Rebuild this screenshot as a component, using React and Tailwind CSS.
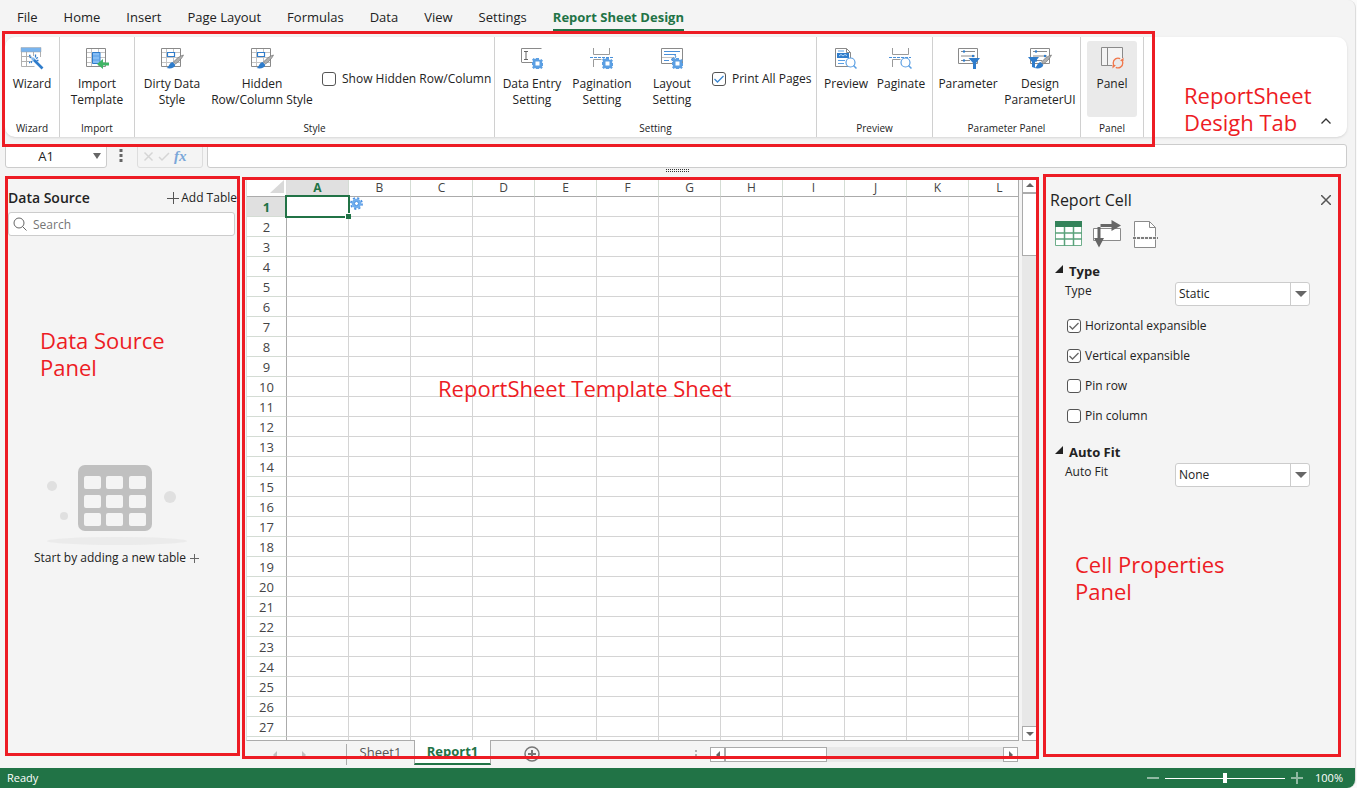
import { useState } from "react";
import clsx from "clsx";

const menus = [
  "File",
  "Home",
  "Insert",
  "Page Layout",
  "Formulas",
  "Data",
  "View",
  "Settings",
];

const columns = ["A", "B", "C", "D", "E", "F", "G", "H", "I", "J", "K", "L"];
const rows = Array.from({ length: 27 }, (_, i) => i + 1);

/* ---------- Icons ---------- */

function Icon({ children }) {
  return (
    <svg
      className="w-6 h-6 shrink-0"
      viewBox="0 0 24 24"
      fill="none"
      aria-hidden="true"
    >
      {children}
    </svg>
  );
}

function Gear({ x = 0, y = 0 }) {
  return (
    <g transform={`translate(${x} ${y})`}>
      <path
        d="M4 0h3v1.6l1.1.5L9.300 1l1.7 1.700-1.100 1.200.5 1.100H11v3h-.600l-.500 1.100L11 9.300 9.300 11l-1.200-1.100-1.100.5V11H4v-.600l-1.100-.500L1.700 11 0 9.300l1.100-1.200L.600 7H0V4h.600l.5-1.100L0 1.700 1.700 0l1.200 1.100L4 .600z"
        fill="#5b9fe3"
      />
      <rect x="3.500" y="3.500" width="4" height="4" fill="#fff" />
    </g>
  );
}

function GridLines() {
  return (
    <>
      <path d="M1.500 2.500h19v18h-19z" stroke="#8a8a8a" />
      <path
        d="M2 6.500h18M2 11.500h18M2 16.500h18M6.500 3v17M13.500 3v17"
        stroke="#c4c4c4"
      />
    </>
  );
}

function Brush() {
  return (
    <>
      <path d="M23.500 9c-1.500 3.500-5 7-8 9l-2-2c2.500-3 6-6 10-7z" fill="#b0b0b0" stroke="#777" strokeWidth=".7" />
      <path d="M12.500 16l2.800 2.700c-.5 3.500-5 4.300-8.800 3.300 2.800-.8 2.200-5 6-6z" fill="#2f7ccb" />
    </>
  );
}

function Lens() {
  return (
    <>
      <circle cx="16.500" cy="16.500" r="4.500" fill="#fff" stroke="#5b9fe3" strokeWidth="1.200" />
      <path d="M19.500 19.500l3 3" stroke="#5b9fe3" strokeWidth="1.500" />
    </>
  );
}

function WizardIcon() {
  return (
    <Icon>
      <path d="M1.500 2v18.500h13M20.500 2v9M1.500 10.500h10M1.500 15.500h10M6.500 6v14M13.500 6v4" stroke="#b0b0b0" />
      <path d="M1 1.500h20V6H1z" fill="#79b4ee" stroke="#a3a3a3" strokeWidth=".5" />
      <path d="M13.500 13.500l9 9" stroke="#2f7ccb" strokeWidth="2.600" />
      <path d="M12 12l2 2" stroke="#82b8ec" strokeWidth="2.600" />
      <path d="M15.500 8.500v3M18 11.500l-2 1M9.500 11l2 1M11 17l1-2M18.500 14.500h-2M9 9.500h1.500M9 16.500h1" stroke="#2f7ccb" strokeWidth="1.300" />
    </Icon>
  );
}

function ImportIcon() {
  return (
    <Icon>
      <GridLines />
      <path d="M7.500 6.500h7.500v11H7.500z" fill="#85bdf5" stroke="#2f7ccb" />
      <path d="M8 10h7M8 14h7" stroke="#5b9fe3" />
      <path d="M12 18l6-5v3.500h6v3h-6V23z" fill="#40b565" />
    </Icon>
  );
}

function StyleIcon() {
  return (
    <Icon>
      <GridLines />
      <path d="M7.500 6.500h7v4h-7z" stroke="#2f7ccb" fill="#fff" strokeWidth="1.200" />
      <Brush />
    </Icon>
  );
}

function DataEntryIcon() {
  return (
    <Icon>
      <path d="M1.500 2.500h20M2 16.500h10M1.500 2.500v14" stroke="#8a8a8a" />
      <path d="M4 5.500h4M4 13.500h4M6 5.500v8" stroke="#666" />
      <Gear x={12} y={12} />
    </Icon>
  );
}

function PaginationIcon() {
  return (
    <Icon>
      <path d="M3.500 2v6.500h16V2M3.500 21v-7.500h8" stroke="#9a9a9a" />
      <path d="M0 11.500h23" stroke="#4a90d9" strokeDasharray="3 1" />
      <Gear x={12} y={12} />
    </Icon>
  );
}

function LayoutIcon() {
  return (
    <Icon>
      <path d="M1.500 2.500h21v15h-21z" stroke="#8a8a8a" />
      <path d="M4 5.500h16M4 8.500h12M4 14.500h5" stroke="#4a90d9" />
      <path d="M2 11.500h12" stroke="#c4c4c4" />
      <path d="M14 8.500c3 1 2 4-2 5m2-2l-3 2 3 2" stroke="#4a90d9" />
      <Gear x={12} y={12} />
    </Icon>
  );
}

function PreviewIcon() {
  return (
    <Icon>
      <path d="M1.500 2.500h11l4 4v14h-15z" fill="#fff" stroke="#8a8a8a" />
      <path d="M12.500 2.500v4h4" stroke="#8a8a8a" />
      <path d="M3 7h12v5H3z" fill="#2f7ccb" />
      <path d="M5 10l2-1.500L9 10l2-1.500 2 1" stroke="#b5d8f8" />
      <path d="M4 5h6M4 14.500h7M4 17.500h6" stroke="#5b9fe3" />
      <Lens />
    </Icon>
  );
}

function PaginateIcon() {
  return (
    <Icon>
      <path d="M3.500 2v6.500h16V2M3.500 21v-7.500h8" stroke="#9a9a9a" />
      <path d="M0 11.500h22" stroke="#4a90d9" strokeDasharray="3 1" />
      <Lens />
    </Icon>
  );
}

function ParameterLines() {
  return (
    <>
      <path d="M2.500 2.500h19v15h-19z" stroke="#8a8a8a" />
      <path d="M5 5.500h14M5 10h14M5 14.500h9" stroke="#8a8a8a" />
      <circle cx="8" cy="5.500" r="1.200" fill="#2f7ccb" />
      <circle cx="17" cy="10" r="1.200" fill="#2f7ccb" />
      <circle cx="8" cy="14.500" r="1.200" fill="#2f7ccb" />
    </>
  );
}

function ParameterIcon() {
  return (
    <Icon>
      <ParameterLines />
      <path d="M12.500 12H24l-4 5v6h-3v-6z" fill="#2f7ccb" />
    </Icon>
  );
}

function DesignParameterIcon() {
  return (
    <Icon>
      <ParameterLines />
      <path d="M0 11h11l-4 5v6l-3-1v-5z" fill="#2f7ccb" />
      <Brush />
    </Icon>
  );
}

function PanelIcon() {
  return (
    <Icon>
      <path d="M12 19.500H1.500v-18h21V12M7.500 1.500v18" fill="#f4f4f4" stroke="#8a8a8a" />
      <circle cx="18" cy="17" r="4.800" fill="#eaeaea" />
      <path d="M13.200 17a4.800 4.800 0 0 1 7-4.300M21.500 13.700a4.800 4.800 0 0 1 1.300 3.300M22.800 17a4.800 4.800 0 0 1-7 4.300M14.500 20.300a4.800 4.800 0 0 1-1.300-3.300" stroke="#f0764a" strokeWidth="1.300" />
      <path d="M23.500 11.500v3.500H20zM12.500 22.500V19H16z" fill="#f0764a" />
    </Icon>
  );
}

/* ---------- Small controls ---------- */

function Checkbox({ label, defaultChecked, blue, className }) {
  return (
    <label className={clsx("flex items-center", className)}>
      <span className="grid w-[14px] h-[14px] shrink-0">
        <input
          type="checkbox"
          defaultChecked={defaultChecked}
          className="peer col-start-1 row-start-1 w-[14px] h-[14px] appearance-none rounded-[3px] border border-[#555] bg-white"
        />
        <svg
          className={clsx(
            "invisible peer-checked:visible pointer-events-none col-start-1 row-start-1 w-[14px] h-[14px]",
            blue ? "text-[#3a86d0]" : "text-[#666]"
          )}
          viewBox="0 0 14 14"
          fill="none"
          stroke="currentColor"
          strokeWidth="1.300"
        >
          <path d="M2.500 7l3 3 6-6" />
        </svg>
      </span>
      <span className="whitespace-nowrap">{label}</span>
    </label>
  );
}

function RibbonGroup({ title, className, children }) {
  return (
    <section
      className={clsx(
        "flex flex-col shrink-0 border-r border-[#d0d0d0] pt-1",
        className
      )}
    >
      <div className="flex flex-1">{children}</div>
      <h3 className="h-[17px] text-center text-[10px] leading-4">{title}</h3>
    </section>
  );
}

function RibbonButton({ icon, lines, className }) {
  return (
    <button
      className={clsx(
        "flex flex-col items-center h-[76px] pt-[5px] rounded-[3px] text-xs whitespace-nowrap",
        className
      )}
    >
      {icon}
      <span className="mt-[6px]">
        {lines.map((line) => (
          <span key={line} className="block leading-4">
            {line}
          </span>
        ))}
      </span>
    </button>
  );
}

function SelectRow({ label, id, options }) {
  return (
    <div className="flex justify-between items-start mt-[2px] pl-[22px] pr-[31px]">
      <label htmlFor={id} className="leading-4">
        {label}
      </label>
      <div className="grid w-[135px] h-6 mt-[-1px]">
        <select
          id={id}
          className="col-start-1 row-start-1 appearance-none rounded-[3px] border border-[#ccc] bg-white pl-[3px] text-xs"
        >
          {options.map((option) => (
            <option key={option}>{option}</option>
          ))}
        </select>
        <span className="pointer-events-none col-start-1 row-start-1 justify-self-end flex items-center justify-center w-5 border-l border-[#ccc]">
          <svg className="w-3 h-[6px]" viewBox="0 0 12 6">
            <path d="M0 0h12L6 6z" fill="#666" />
          </svg>
        </span>
      </div>
    </div>
  );
}

function PropertyHeading({ children }) {
  return (
    <h3 className="flex items-center gap-[6px] pl-3 text-[13px] leading-5 font-bold">
      <svg className="w-2 h-2 mb-1" viewBox="0 0 8 8">
        <path d="M8 0v8H0z" fill="#222" />
      </svg>
      {children}
    </h3>
  );
}

function Arrow({ direction, className }) {
  const paths = {
    up: "M0 6h8L4 2z",
    down: "M0 2h8L4 6z",
    left: "M6 0v8L2 4z",
    right: "M2 0v8l4-4z",
  };
  return (
    <svg className={clsx("w-2 h-2 shrink-0", className)} viewBox="0 0 8 8">
      <path d={paths[direction]} fill="currentColor" />
    </svg>
  );
}

/* ---------- Page sections ---------- */

function MenuBar() {
  return (
    <nav className="flex h-[37px] pl-[17px] gap-[26px] text-[13px] leading-5">
      {menus.map((menu) => (
        <button key={menu} className="self-start pt-[7px] whitespace-nowrap">
          {menu}
        </button>
      ))}
      <button className="self-start h-[31px] pt-[7px] pb-1 border-b-2 border-[#217346] font-bold text-[#217346] whitespace-nowrap">
        Report Sheet Design
      </button>
    </nav>
  );
}

function Ribbon() {
  return (
    <div className="relative flex h-[100px] ml-[5px] mr-2 rounded-[10px] bg-white shadow">
      <RibbonGroup title="Wizard" className="w-[55px]">
        <RibbonButton icon={<WizardIcon />} lines={["Wizard"]} className="w-full" />
      </RibbonGroup>
      <RibbonGroup title="Import" className="w-[75px]">
        <RibbonButton icon={<ImportIcon />} lines={["Import", "Template"]} className="w-full" />
      </RibbonGroup>
      <RibbonGroup title="Style" className="w-[360px]">
        <RibbonButton icon={<StyleIcon />} lines={["Dirty Data", "Style"]} className="ml-[2px] w-[70px]" />
        <RibbonButton icon={<StyleIcon />} lines={["Hidden", "Row/Column Style"]} className="ml-[3px] w-[104px]" />
        <Checkbox label="Show Hidden Row/Column" className="ml-2 h-[76px] gap-[6px] text-xs" />
      </RibbonGroup>
      <RibbonGroup title="Setting" className="w-[322px]">
        <div className="flex gap-[6px] pl-[5px]">
          <RibbonButton icon={<DataEntryIcon />} lines={["Data Entry", "Setting"]} className="w-16" />
          <RibbonButton icon={<PaginationIcon />} lines={["Pagination", "Setting"]} className="w-16" />
          <RibbonButton icon={<LayoutIcon />} lines={["Layout", "Setting"]} className="w-16" />
        </div>
        <Checkbox label="Print All Pages" defaultChecked blue className="ml-2 h-[76px] gap-[6px] text-xs" />
      </RibbonGroup>
      <RibbonGroup title="Preview" className="w-[116px]">
        <div className="flex gap-[5px] pl-1">
          <RibbonButton icon={<PreviewIcon />} lines={["Preview"]} className="w-[50px]" />
          <RibbonButton icon={<PaginateIcon />} lines={["Paginate"]} className="w-[50px]" />
        </div>
      </RibbonGroup>
      <RibbonGroup title="Parameter Panel" className="w-[148px]">
        <div className="flex gap-[7px] pl-[5px]">
          <RibbonButton icon={<ParameterIcon />} lines={["Parameter"]} className="w-[60px]" />
          <RibbonButton icon={<DesignParameterIcon />} lines={["Design", "ParameterUI"]} className="w-[70px]" />
        </div>
      </RibbonGroup>
      <RibbonGroup title="Panel" className="w-[63px]">
        <RibbonButton icon={<PanelIcon />} lines={["Panel"]} className="mx-[6px] w-[50px] bg-[#eaeaea]" />
      </RibbonGroup>
      <div className="flex flex-1 items-end justify-between pl-10 pr-4 pb-[11px]">
        <Note className="mb-[-10px]">
          ReportSheet
          <br />
          Desigh Tab
        </Note>
        <button aria-label="Collapse ribbon">
          <svg className="w-[10px] h-[10px]" viewBox="0 0 10 10" fill="none" stroke="#333" strokeWidth="1.300">
            <path d="M.5 7.500L5 3l4.500 4.500" />
          </svg>
        </button>
      </div>
      <div className="pointer-events-none absolute -left-[3px] -top-[6px] w-[1153px] h-[116px] border-[3px] border-[#ed1c24]" />
    </div>
  );
}

function Note({ className, children }) {
  return (
    <p className={clsx("text-[22px] leading-[27px] text-[#ed1c24] whitespace-nowrap", className)}>
      {children}
    </p>
  );
}

function FormulaBar() {
  return (
    <div className="flex h-6 mt-[7px] ml-[5px] mr-2 text-xs">
      <div className="flex items-center w-[102px] rounded-[3px] border border-[#ccc] bg-white pr-[5px]">
        <input
          aria-label="Name box"
          defaultValue="A1"
          className="w-[80px] min-w-0 pt-[2px] text-[13px] text-center outline-none"
        />
        <button aria-label="Choose name" className="ml-auto">
          <svg className="w-2 h-[6px]" viewBox="0 0 8 6">
            <path d="M0 0h8L4 6z" fill="#666" />
          </svg>
        </button>
      </div>
      <svg className="w-[30px] h-6" viewBox="0 0 30 24" fill="#666">
        <path d="M12.500 5h3v3h-3zM12.500 10h3v3h-3zM12.500 15h3v3h-3z" />
      </svg>
      <div className="flex items-center w-[66px] gap-1 rounded-[3px] border border-[#ddd] pl-[5px]">
        <button aria-label="Cancel">
          <svg className="w-[11px] h-[11px]" viewBox="0 0 11 11" stroke="#d5d5d5" strokeWidth="1.500">
            <path d="M1.500 1.500l8 8M9.500 1.500l-8 8" />
          </svg>
        </button>
        <button aria-label="Enter">
          <svg className="w-3 h-[11px]" viewBox="0 0 12 11" fill="none" stroke="#d5d5d5" strokeWidth="1.500">
            <path d="M1 6l3 3 7-7" />
          </svg>
        </button>
        <button className="font-['Liberation_Serif',serif] text-[15px] leading-4 italic font-bold text-[#7ba7d9]">
          fx
        </button>
      </div>
      <input
        aria-label="Formula"
        className="ml-1 flex-1 min-w-0 rounded-[3px] border border-[#ccc] bg-white px-2 outline-none"
      />
    </div>
  );
}

function DataSourcePanel() {
  return (
    <aside className="relative flex flex-col w-[235px] shrink-0 mt-[2px] mb-3 px-[3px] text-xs">
      <div className="flex items-center justify-between h-9 pt-2">
        <h2 className="text-sm leading-5 font-semibold">Data Source</h2>
        <button className="flex items-center gap-[2px] whitespace-nowrap">
          <svg className="w-3 h-3" viewBox="0 0 12 12" stroke="#555">
            <path d="M0 6.500h12M6.500 0v12" />
          </svg>
          Add Table
        </button>
      </div>
      <label className="flex items-center h-6 gap-[6px] mr-[2px] rounded-[3px] border border-[#ccc] bg-white px-1">
        <svg className="w-[14px] h-[14px] shrink-0" viewBox="0 0 14 14" fill="none" stroke="#666">
          <circle cx="6" cy="6" r="5" />
          <path d="M9.500 9.500l4 4" />
        </svg>
        <input
          aria-label="Search"
          placeholder="Search"
          className="flex-1 min-w-0 pt-[2px] outline-none placeholder:text-[#757575]"
        />
      </label>
      <Note className="mt-[91px] ml-8">
        Data Source
        <br />
        Panel
      </Note>
      <div className="flex flex-col items-center mt-[83px] pr-3">
        <svg className="w-[142px] h-[84px]" viewBox="0 0 142 84">
          <ellipse cx="71" cy="77" rx="70" ry="4" fill="#ebebeb" />
          <circle cx="6" cy="22" r="5" fill="#e0e0e0" />
          <circle cx="18" cy="52" r="4" fill="#e0e0e0" />
          <circle cx="124" cy="33" r="6" fill="#e0e0e0" />
          <rect x="32" y="1" width="74" height="66" rx="7" fill="#c0c0c0" />
          <g fill="#f4f4f4">
            {[12, 31, 49].map((y) =>
              [38, 60, 83].map((x) => (
                <rect key={`${x}-${y}`} x={x} y={y} width="17" height="13" rx="2" />
              ))
            )}
          </g>
        </svg>
        <button className="flex items-center gap-1 mt-[2px] leading-4 whitespace-nowrap">
          Start by adding a new table
          <svg className="w-[9px] h-[9px]" viewBox="0 0 9 9" stroke="#666">
            <path d="M0 4.500h9M4.500 0v9" />
          </svg>
        </button>
      </div>
      <div className="pointer-events-none absolute inset-0 border-[3px] border-[#ed1c24]" />
    </aside>
  );
}

function SheetTable() {
  return (
    <table className="table-fixed w-[784px] border-separate border-spacing-0 text-[13px] leading-4 text-[#444]">
      <thead>
        <tr className="h-5">
          <th className="w-10 border-r border-b border-[#ababab] border-r-[#ddd] p-0">
            <svg className="w-[14px] h-[13px] ml-auto mr-[2px]" viewBox="0 0 14 13">
              <path d="M14 0v13H0z" fill="#d9d9d9" />
            </svg>
          </th>
          {columns.map((col) => (
            <th
              key={col}
              className={clsx(
                "w-[62px] border-r border-b border-[#ababab] border-r-[#d4dcd4] p-0 pt-[2px] text-xs leading-4",
                col === "A" ? "bg-[#e0e0e0] font-bold text-[#217346]" : "font-normal"
              )}
            >
              {col}
            </th>
          ))}
        </tr>
      </thead>
      <tbody>
        {rows.map((row) => (
          <tr key={row} className="h-5">
            <th
              className={clsx(
                "border-r border-b border-[#d4dcd4] border-r-[#ababab] p-0",
                row === 1 ? "bg-[#e0e0e0] font-bold text-[#217346]" : "font-normal"
              )}
            >
              {row}
            </th>
            {columns.map((col) => (
              <td key={col} className="relative border-r border-b border-[#d4d4d4] p-0">
                {row === 1 && col === "A" && <ActiveCell />}
              </td>
            ))}
          </tr>
        ))}
        <tr className="h-5">
          <th className="border-r border-[#ababab] p-0"></th>
          {columns.map((col) => (
            <td key={col} className="border-r border-[#d4d4d4] p-0"></td>
          ))}
        </tr>
      </tbody>
    </table>
  );
}

function ActiveCell() {
  return (
    <>
      <div className="absolute -inset-[2px] border-2 border-[#217346]" />
      <div className="absolute -right-[3px] -bottom-[3px] z-10 w-[6px] h-[6px] border-t border-l border-white bg-[#217346]" />
      <svg className="absolute left-[63px] top-0 z-10 w-[13px] h-[13px]" viewBox="0 0 13 13" fill="none">
        <circle cx="6.500" cy="6.500" r="4.800" fill="#6faeee" />
        <circle cx="6.500" cy="6.500" r="5.600" stroke="#4a90e2" strokeWidth="1.600" strokeDasharray="2.200 2.200" />
        <circle cx="6.500" cy="6.500" r="2" fill="#fff" stroke="#4a90e2" />
      </svg>
    </>
  );
}

function SheetTabs() {
  return (
    <div className="flex h-[27px] text-[13px] leading-5 text-[#555]">
      <div className="flex items-center gap-[21px] w-[101px] my-[3px] pl-[25px] border-r border-[#ababab] text-[#c0c0c0]">
        <Arrow direction="left" />
        <Arrow direction="right" />
      </div>
      <button className="self-start w-[67px] pt-px">Sheet1</button>
      <button className="self-start w-[77px] h-[25px] -mt-px pb-[2px] border-x border-[#ababab] border-b-2 border-b-[#217346] bg-white font-bold text-[#217346]">
        Report1
      </button>
      <button aria-label="New sheet" className="self-start ml-[33px] mt-[5px]">
        <svg className="w-4 h-4" viewBox="0 0 16 16" fill="none" stroke="#777" strokeWidth="1.500">
          <circle cx="8" cy="8" r="7" />
          <path d="M4 8h8M8 4v8" strokeWidth="2" />
        </svg>
      </button>
      <svg className="ml-auto w-[2px] h-[10px] mt-2" viewBox="0 0 2 10" fill="#b0b0b0">
        <path d="M0 1h2v2H0zM0 5h2v2H0zM0 9h2v1H0z" />
      </svg>
      <div className="flex w-[308px] h-[15px] mt-[6px] ml-[13px] mr-[21px] bg-[#e8e8e8] text-[#666]">
        <button aria-label="Scroll left" className="flex items-center justify-center w-[15px] border border-[#ababab] bg-white">
          <Arrow direction="left" />
        </button>
        <div className="w-[102px] border border-[#ababab] bg-white" />
        <button aria-label="Scroll right" className="flex items-center justify-center w-[15px] ml-auto border border-[#ababab] bg-white">
          <Arrow direction="right" />
        </button>
      </div>
    </div>
  );
}

function SheetArea() {
  return (
    <main className="relative flex flex-col flex-1 min-w-0 mt-[3px] ml-[2px] pl-1">
      <div className="flex flex-1 min-h-0">
        <div className="flex-1 min-w-0 overflow-hidden border-l border-r border-b border-[#ababab] border-l-[#ddd] bg-white">
          <SheetTable />
        </div>
        <div className="flex flex-col w-[15px] ml-[3px] mr-[2px] bg-[#e8e8e8] text-[#666]">
          <button aria-label="Scroll up" className="flex items-center justify-center h-4 border border-[#ababab] bg-white">
            <Arrow direction="up" />
          </button>
          <div className="h-[63px] border border-[#ababab] bg-white" />
          <button aria-label="Scroll down" className="flex items-center justify-center h-[15px] mt-auto border border-[#ababab] bg-white">
            <Arrow direction="down" />
          </button>
        </div>
      </div>
      <SheetTabs />
      <Note className="absolute left-[196px] top-[198px]">
        ReportSheet Template Sheet
      </Note>
      <div className="pointer-events-none absolute inset-x-0 top-0 bottom-[9px] z-20 border-[3px] border-[#ed1c24]" />
    </main>
  );
}

function CellPanel() {
  return (
    <aside className="relative w-[298px] shrink-0 ml-1 mr-[14px] mb-[11px] text-xs">
      <div className="flex items-center justify-between pt-4 pl-[7px] pr-[10px]">
        <h2 className="text-base leading-5">Report Cell</h2>
        <button aria-label="Close">
          <svg className="w-[10px] h-[10px]" viewBox="0 0 10 10" stroke="#555" strokeWidth="1.500">
            <path d="M0 0l10 10M10 0L0 10" />
          </svg>
        </button>
      </div>
      <div className="flex gap-[10px] mt-[10px] pl-3">
        <button aria-label="Cell">
          <svg className="block w-7 h-7" viewBox="0 0 28 28" fill="none">
            <path d="M.5 1.500h26v24H.5z" fill="#fff" stroke="#6fae8b" />
            <path d="M0 1h27v6H0z" fill="#33835a" />
            <path d="M0 13h27M0 19h27M9.500 7v19M18.500 7v19" stroke="#5aa27b" strokeWidth="1.500" />
          </svg>
        </button>
        <button aria-label="Expansion">
          <svg className="block w-7 h-7" viewBox="0 0 28 28" fill="none">
            <path d="M.5 8.500h27v12H.5z" fill="#fff" stroke="#8a8a8a" />
            <path d="M4.500 7h3v11h3.500l-5 9.500-5-9.500h3.500z" fill="#666" />
            <path d="M7.500 4h11V0l9.500 5.500-9.500 5.500V7h-11z" fill="#666" />
          </svg>
        </button>
        <button aria-label="Page break">
          <svg className="block w-7 h-7" viewBox="0 0 28 28" fill="none">
            <path d="M3.500 1.500h15l6 6v20h-21z" fill="#fff" stroke="#8a8a8a" />
            <path d="M18.500 1.500v6h6" stroke="#8a8a8a" />
            <path d="M1 18h27" stroke="#f4f4f4" strokeWidth="3" />
            <path d="M2 18h25" stroke="#555" strokeWidth="1.500" strokeDasharray="3 1" />
          </svg>
        </button>
      </div>
      <div className="mt-[13px]">
        <PropertyHeading>Type</PropertyHeading>
        <SelectRow label="Type" id="cell-type" options={["Static", "Expression", "Bound"]} />
        <div className="flex flex-col gap-[14px] mt-3 pl-6">
          <Checkbox label="Horizontal expansible" defaultChecked className="h-4 gap-1" />
          <Checkbox label="Vertical expansible" defaultChecked className="h-4 gap-1" />
          <Checkbox label="Pin row" className="h-4 gap-1" />
          <Checkbox label="Pin column" className="h-4 gap-1" />
        </div>
      </div>
      <div className="mt-[18px]">
        <PropertyHeading>Auto Fit</PropertyHeading>
        <SelectRow label="Auto Fit" id="auto-fit" options={["None", "Row", "Column"]} />
      </div>
      <Note className="mt-16 pl-8">
        Cell Properties
        <br />
        Panel
      </Note>
      <div className="pointer-events-none absolute inset-0 border-[3px] border-[#ed1c24]" />
    </aside>
  );
}

function StatusBar() {
  const [zoom, setZoom] = useState(100);

  return (
    <footer className="flex items-center h-5 shrink-0 pl-[7px] pr-[14px] rounded-br-lg bg-[#217346] text-[11px] leading-4 text-white">
      <span>Ready</span>
      <button aria-label="Zoom out" className="ml-auto">
        <svg className="w-3 h-3" viewBox="0 0 12 12" stroke="#90b9a2" strokeWidth="2">
          <path d="M0 6h12" />
        </svg>
      </button>
      <input
        type="range"
        aria-label="Zoom"
        min="0"
        max="200"
        value={zoom}
        onChange={(e) => setZoom(Number(e.target.value))}
        className="w-[120px] h-[10px] mx-[6px] appearance-none bg-transparent [&::-webkit-slider-runnable-track]:h-px [&::-webkit-slider-runnable-track]:bg-white [&::-webkit-slider-thumb]:appearance-none [&::-webkit-slider-thumb]:w-1 [&::-webkit-slider-thumb]:h-[10px] [&::-webkit-slider-thumb]:-mt-[5px] [&::-webkit-slider-thumb]:bg-white"
      />
      <button aria-label="Zoom in">
        <svg className="w-3 h-3" viewBox="0 0 12 12" stroke="#90b9a2" strokeWidth="2">
          <path d="M0 6h12M6 0v12" />
        </svg>
      </button>
      <span className="w-[26px] ml-3 whitespace-nowrap">{zoom}%</span>
    </footer>
  );
}

function App() {
  return (
    <div className="h-screen min-h-[600px] bg-[#fafafa] pr-px font-['Open_Sans','Noto_Sans',sans-serif] text-[#222]">
      <div className="flex flex-col h-full rounded-r-lg border-r border-[#ddd] bg-[#f4f4f4]">
        <MenuBar />
        <Ribbon />
        <FormulaBar />
        <div className="flex justify-center h-[6px]">
          <svg className="w-6 h-[6px]" viewBox="0 0 24 6" stroke="#333" strokeDasharray="1 1">
            <path d="M0 1.500h24M0 3.500h24" />
          </svg>
        </div>
        <div className="flex flex-1 min-h-0 pl-[5px]">
          <DataSourcePanel />
          <SheetArea />
          <CellPanel />
        </div>
        <StatusBar />
      </div>
    </div>
  );
}

export default App;
